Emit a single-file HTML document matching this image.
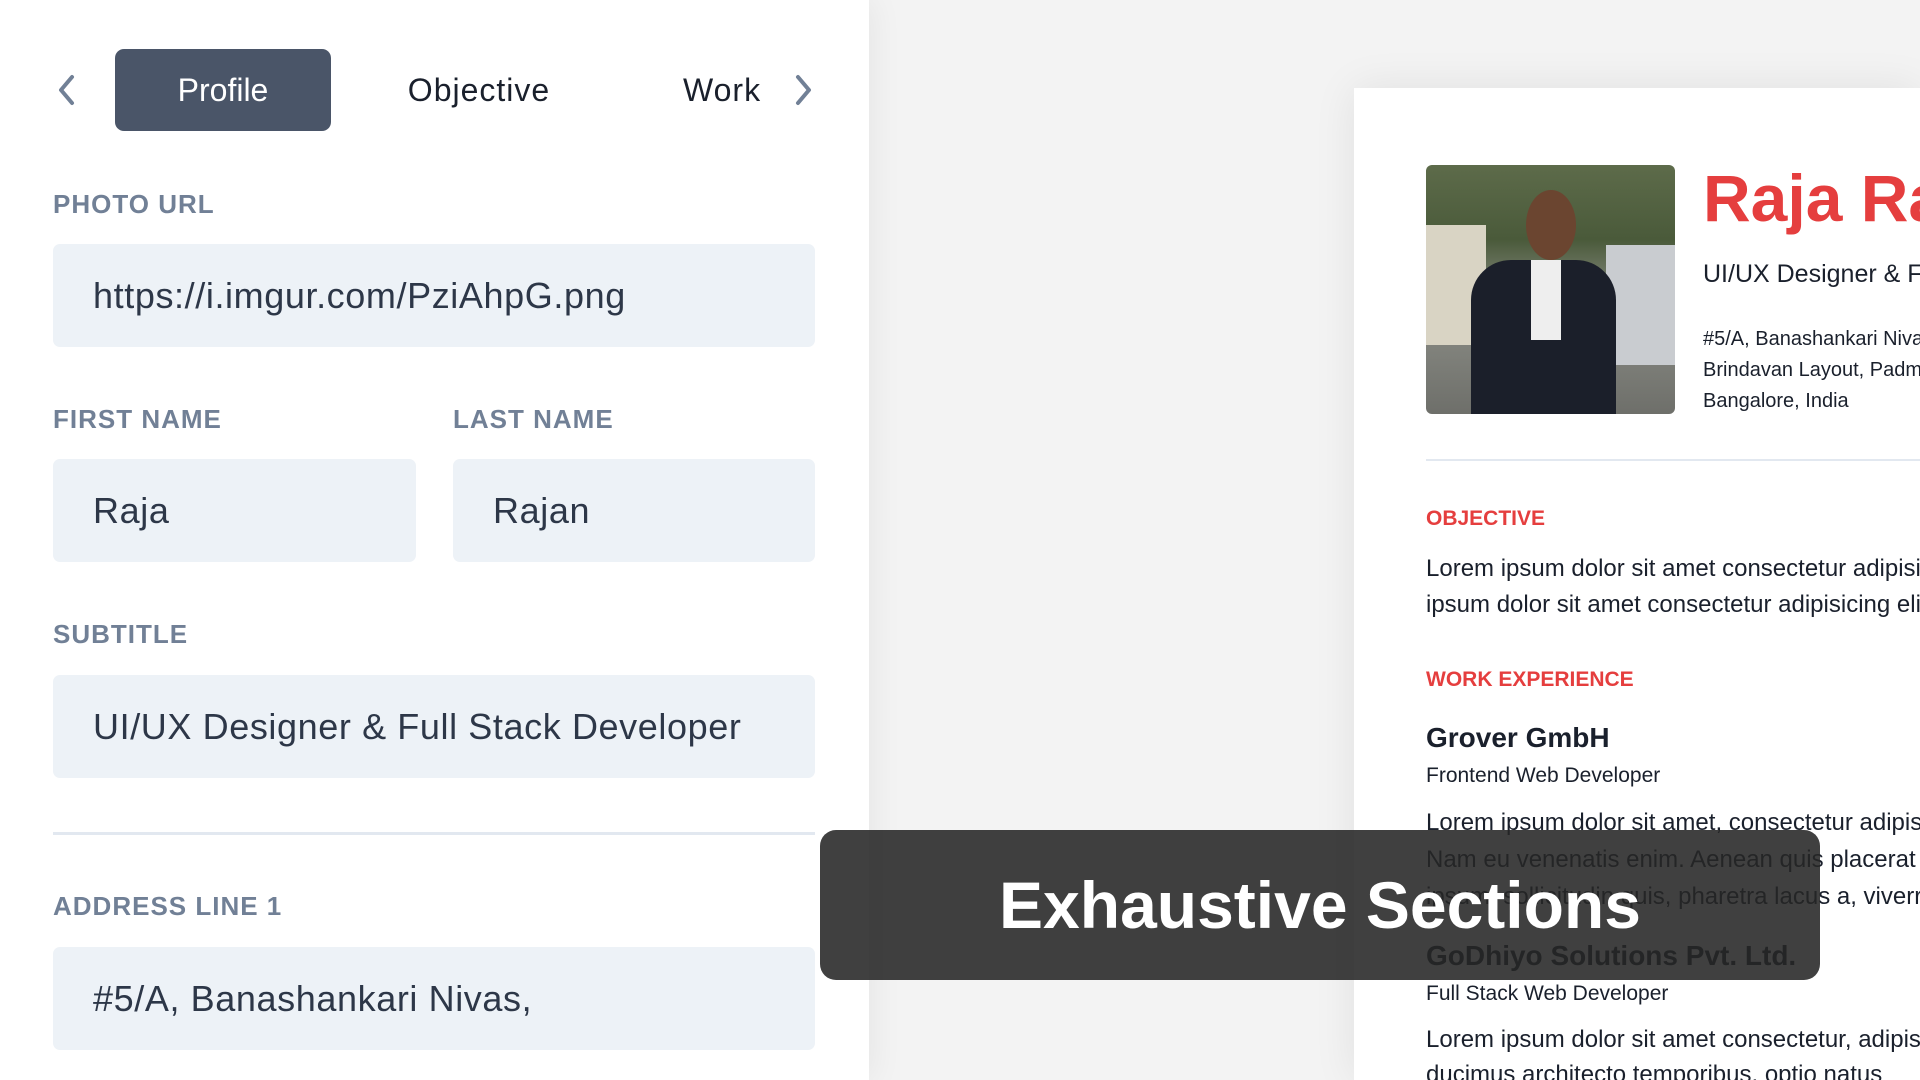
<!DOCTYPE html>
<html><head><meta charset="utf-8"><style>
*{margin:0;padding:0;box-sizing:border-box}
html,body{width:1920px;height:1080px;overflow:hidden}
body{background:#f3f3f3;font-family:"Liberation Sans",sans-serif;position:relative}
.left{position:absolute;left:0;top:0;width:869px;height:1080px;background:#fff;box-shadow:4px 0 30px rgba(0,0,0,0.06);z-index:2}
.tab{position:absolute;top:49px;height:82px;line-height:82px;font-size:32px;color:#1a202c;text-align:center}
.lbl{position:absolute;left:53px;font-size:26px;font-weight:bold;color:#718096;letter-spacing:1px}
.inp{position:absolute;height:103px;background:#edf2f7;border-radius:7px;font-size:36px;color:#2d3748;line-height:103px;padding-left:40px;white-space:nowrap;overflow:hidden;letter-spacing:0.6px}
.paper{position:absolute;left:1354px;top:88px;width:566px;height:992px;background:#fff;box-shadow:0 0 40px rgba(0,0,0,0.08);z-index:1;overflow:hidden}
.t{position:absolute;white-space:nowrap;color:#1a202c}
.red{color:#e53e3e;font-weight:bold}
</style></head><body>
<div class="left">
<svg style="position:absolute;left:56px;top:74px" width="22" height="32" viewBox="0 0 22 32"><path d="M16 3 L5 16 L16 29" stroke="#718096" stroke-width="4" fill="none" stroke-linecap="round" stroke-linejoin="round"/></svg>
<svg style="position:absolute;left:792px;top:74px" width="22" height="32" viewBox="0 0 22 32"><path d="M6 3 L17 16 L6 29" stroke="#718096" stroke-width="4" fill="none" stroke-linecap="round" stroke-linejoin="round"/></svg>
<div class="tab" style="left:115px;width:216px;background:#4a5568;color:#fff;border-radius:9px">Profile</div>
<div class="tab" style="left:379px;width:200px;letter-spacing:1px">Objective</div>
<div class="tab" style="left:683px;width:82px;overflow:hidden;text-align:left;letter-spacing:1px">Work</div>
<div class="lbl" style="top:189px">PHOTO URL</div>
<div class="inp" style="left:53px;top:244px;width:762px">https://i.imgur.com/PziAhpG.png</div>
<div class="lbl" style="top:404px">FIRST NAME</div>
<div class="lbl" style="top:404px;left:453px">LAST NAME</div>
<div class="inp" style="left:53px;top:459px;width:363px">Raja</div>
<div class="inp" style="left:453px;top:459px;width:362px">Rajan</div>
<div class="lbl" style="top:619px">SUBTITLE</div>
<div class="inp" style="left:53px;top:675px;width:762px;padding-right:36px">UI/UX Designer &amp; Full Stack Developer</div>
<div style="position:absolute;left:53px;top:832px;width:762px;height:3px;background:#e2e8f0"></div>
<div class="lbl" style="top:891px">ADDRESS LINE 1</div>
<div class="inp" style="left:53px;top:947px;width:762px">#5/A, Banashankari Nivas,</div>
</div>
<div class="paper">
<div style="position:absolute;left:72px;top:77px;width:249px;height:249px;border-radius:6px;background:linear-gradient(180deg,#5d6b4a 0%,#4a5a3a 30%,#8d8f88 55%,#6e6f6a 100%);overflow:hidden">
<div style="position:absolute;left:0;top:60px;width:60px;height:120px;background:#d9d4c4"></div>
<div style="position:absolute;left:180px;top:80px;width:69px;height:120px;background:#c9ccd0"></div>
<div style="position:absolute;left:100px;top:25px;width:50px;height:70px;border-radius:50%;background:#6b4530"></div>
<div style="position:absolute;left:45px;top:95px;width:145px;height:170px;border-radius:40px 40px 0 0;background:#1b1f2a"></div>
<div style="position:absolute;left:105px;top:95px;width:30px;height:80px;background:#eee"></div>
</div>
<div class="t red" style="left:349px;top:72px;font-size:66px">Raja Rajan</div>
<div class="t" style="left:349px;top:172px;font-size:25px">UI/UX Designer &amp; Full Stack Developer</div>
<div class="t" style="left:349px;top:236px;font-size:20px;line-height:31px">#5/A, Banashankari Nivas,<br>Brindavan Layout, Padmanabhanagar<br>Bangalore, India</div>
<div style="position:absolute;left:72px;top:371px;width:700px;height:2px;background:#e2e8f0"></div>
<div class="t red" style="left:72px;top:419px;font-size:21px">OBJECTIVE</div>
<div class="t" style="left:72px;top:463px;font-size:24px;line-height:36px">Lorem ipsum dolor sit amet consectetur adipisicing elit.<br>ipsum dolor sit amet consectetur adipisicing elit.</div>
<div class="t red" style="left:72px;top:580px;font-size:21px">WORK EXPERIENCE</div>
<div class="t" style="left:72px;top:634px;font-size:28px;font-weight:bold">Grover GmbH</div>
<div class="t" style="left:72px;top:676px;font-size:21px">Frontend Web Developer</div>
<div class="t" style="left:72px;top:716px;font-size:24px;line-height:37px">Lorem ipsum dolor sit amet, consectetur adipisicing<br>Nam eu venenatis enim. Aenean quis placerat<br>ipsum, sollicitudin quis, pharetra lacus a, viverra</div>
<div class="t" style="left:72px;top:852px;font-size:28px;font-weight:bold">GoDhiyo Solutions Pvt. Ltd.</div>
<div class="t" style="left:72px;top:894px;font-size:21px">Full Stack Web Developer</div>
<div class="t" style="left:72px;top:934px;font-size:24px;line-height:35px">Lorem ipsum dolor sit amet consectetur, adipisicing<br>ducimus architecto temporibus, optio natus</div>
</div>
<div style="position:absolute;left:820px;top:830px;width:1000px;height:150px;background:rgba(38,38,38,0.88);border-radius:16px;z-index:3;color:#fff;font-size:66px;font-weight:bold;text-align:center;line-height:150px">Exhaustive Sections</div>
</body></html>
